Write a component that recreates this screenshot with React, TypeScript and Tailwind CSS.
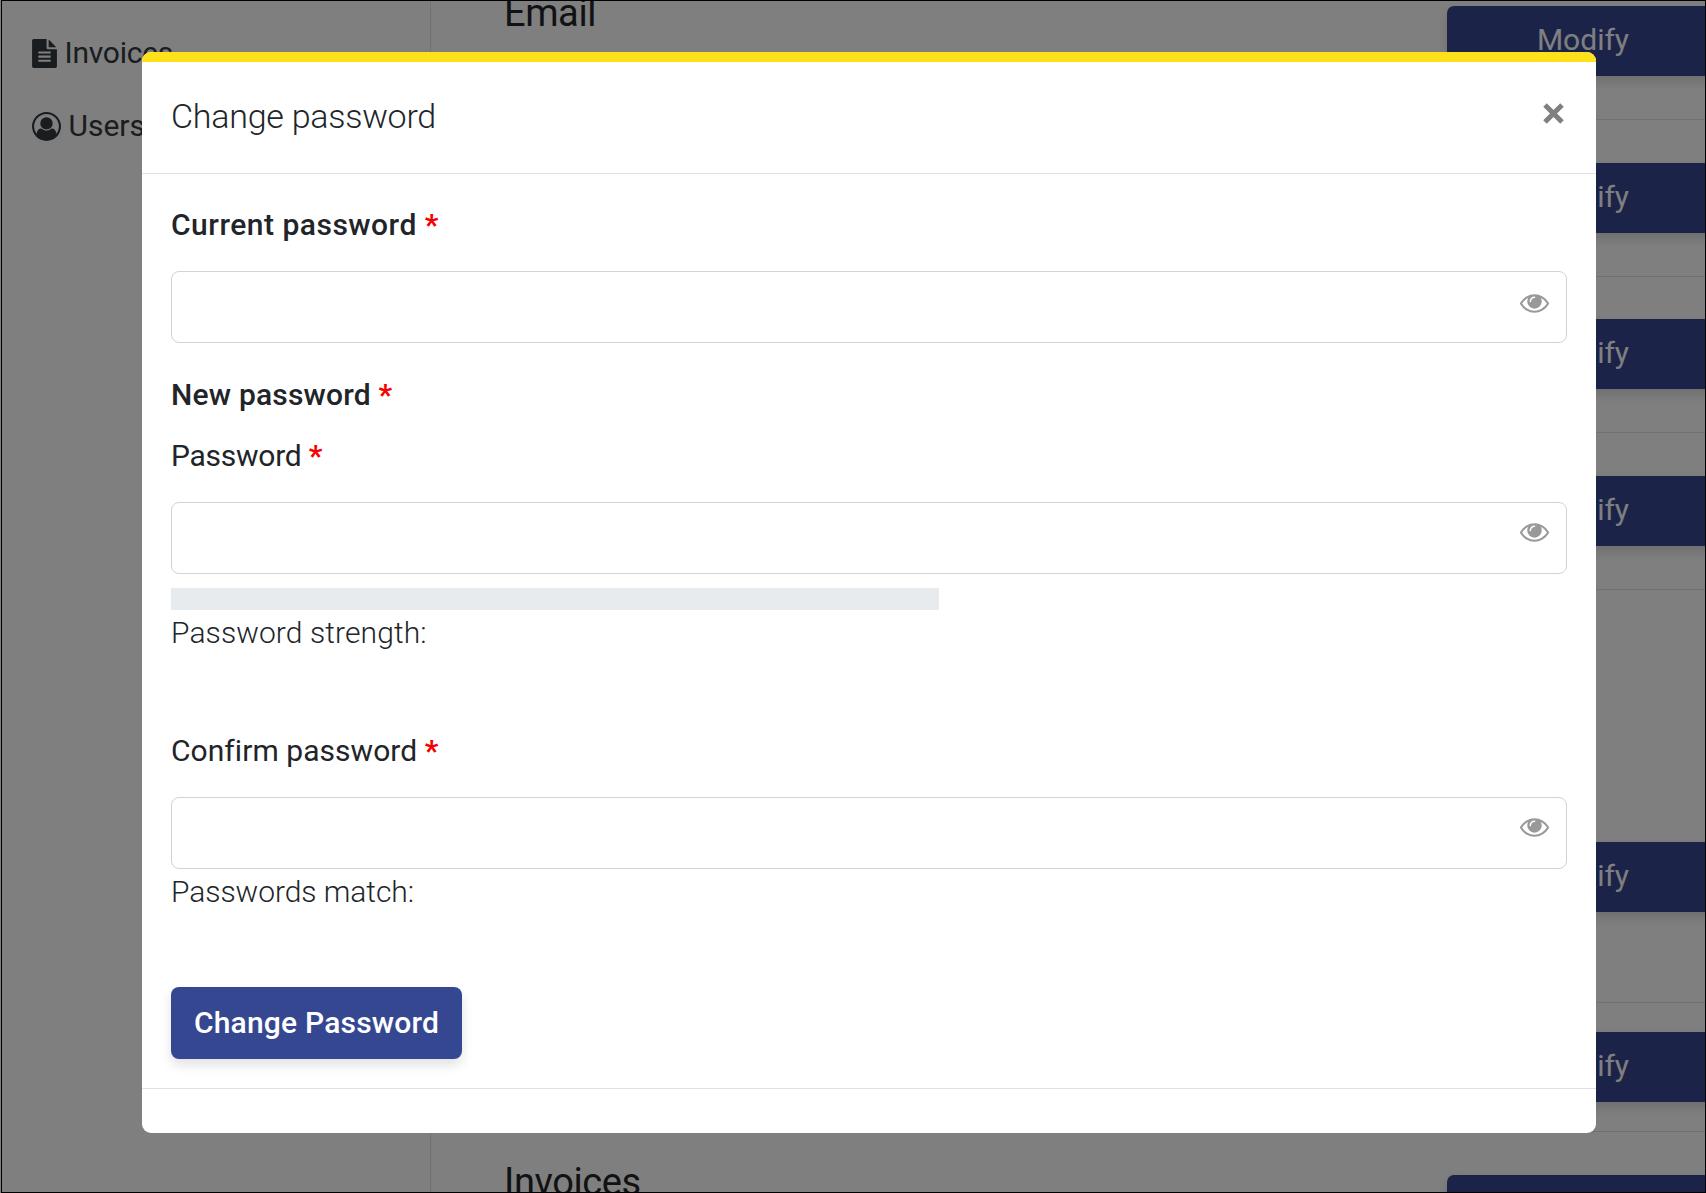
import React from "react";

function FileTextIcon() {
  return (
    <svg viewBox="128 0 1536 1792" className="h-[29px] w-[25px] shrink-0" fill="currentColor" aria-hidden="true">
      <path d="M1596 476q14 14 28 36h-472v-472q22 14 36 28zm-476 164h544v1056q0 40-28 68t-68 28h-1344q-40 0-68-28t-28-68v-1600q0-40 28-68t68-28h800v544q0 40 28 68t68 28zm160 736v-64q0-14-9-23t-23-9h-704q-14 0-23 9t-9 23v64q0 14 9 23t23 9h704q14 0 23-9t9-23zm0-256v-64q0-14-9-23t-23-9h-704q-14 0-23 9t-9 23v64q0 14 9 23t23 9h704q14 0 23-9t9-23zm0-256v-64q0-14-9-23t-23-9h-704q-14 0-23 9t-9 23v64q0 14 9 23t23 9h704q14 0 23-9t9-23z" />
    </svg>
  );
}

function UserCircleIcon() {
  return (
    <svg viewBox="0 0 1792 1792" className="size-[29px] shrink-0" fill="currentColor" aria-hidden="true">
      <path d="M896 0q182 0 348 71t286 191 191 286 71 348q0 181-70.5 347t-190.5 286-286 191.5-349 71.5-349-71-285.5-191.5-190.5-286-71-347.5 71-348 191-286 286-191 348-71zm619 1351q149-205 149-455 0-156-61-298t-164-245-245-164-298-61-298 61-245 164-164 245-61 298q0 250 149 455 66-327 306-327 131 128 313 128t313-128q240 0 306 327zm-235-647q0-159-112.5-271.5t-271.5-112.5-271.5 112.5-112.5 271.5 112.5 271.5 271.5 112.5 271.5-112.5 112.5-271.5z" />
    </svg>
  );
}

function EyeIcon() {
  return (
    <svg viewBox="0 384 1792 1152" className="h-[19px] w-[29px]" fill="currentColor" aria-hidden="true">
      <path d="M1664 960q-152-236-381-353 61 104 61 225 0 185-131.5 316.5t-316.5 131.5-316.5-131.5-131.5-316.5q0-121 61-225-229 117-381 353 133 205 333.500 326.500t434.500 121.500 434.500-121.500 333.500-326.500zm-720-384q0-20-14-34t-34-14q-125 0-214.500 89.500t-89.500 214.500q0 20 14 34t34 14 34-14 14-34q0-86 61-147t147-61q20 0 34-14t14-34zm848 384q0 34-20 69-140 230-376.500 368.500t-499.500 138.500-499.500-139-376.500-368q-20-35-20-69t20-69q140-229 376.500-368t499.500-139 499.500 139 376.500 368q20 35 20 69z" />
    </svg>
  );
}

function ModifyButton() {
  return (
    <button
      type="button"
      className="block h-[70px] w-[275px] shrink-0 rounded-[7px] bg-[#364792] pb-[3px] pr-[3px] text-center text-[30px] leading-[45px] text-white shadow-[0_5px_12px_rgba(0,0,0,0.15)]"
    >
      Modify
    </button>
  );
}

const rows = [
  { row: "h-[119px] pt-[5px]", title: "Email", titleClass: "-mt-[17px]" },
  { row: "h-[157px] pt-[43px]" },
  { row: "h-[156px] pt-[42px]" },
  { row: "h-[157px] pt-[43px]" },
  { row: "h-[413px] pt-[252px]" },
  { row: "h-[129px] pt-[29px]" },
  { row: "h-[157px] pt-[43px]", title: "Invoices", titleClass: "-mt-[17px]" },
];

function Star() {
  return <span className="font-bold text-[#f60000]"> *</span>;
}

function PasswordInput({ label, eye }: { label: string; eye: string }) {
  return (
    <div className="relative mt-6">
      <input
        type="password"
        aria-label={label}
        className="block h-[72px] w-full rounded-[8px] border border-[#ced4da] bg-white px-5 outline-none"
      />
      <span className={`absolute right-[18px] text-[#999] ${eye}`}>
        <EyeIcon />
      </span>
    </div>
  );
}

export default function App() {
  return (
    <div className="h-[1193px] w-[1706px] overflow-hidden bg-[#808080] pl-px font-[Roboto,'Liberation_Sans',sans-serif]">
      <div className="relative h-full overflow-hidden border border-black bg-white">
        <div className="flex h-full">
          <aside className="w-[429px] shrink-0 border-r border-[#dee2e6] pl-[30px] text-[30px] leading-[45px] text-[#343a40]">
            <div className="mt-[30px] flex items-center gap-[7.5px] tracking-[-0.25px]">
              <FileTextIcon />
              <span className="-mt-px mb-px">Invoices</span>
            </div>
            <div className="mt-[28px] flex items-center gap-[7.5px]">
              <UserCircleIcon />
              <span className="-mt-px mb-px">Users</span>
            </div>
          </aside>
          <main className="w-[1291px] shrink-0 pl-[72px]">
            {rows.map((r, i) => (
              <section key={i} className={`flex items-start justify-between border-b border-[#dee2e6] pl-px ${r.row}`}>
                <h2 className={`text-[38px] leading-[48px] tracking-[-0.4px] text-[#212529] ${r.titleClass ?? ""}`}>{r.title}</h2>
                <ModifyButton />
              </section>
            ))}
          </main>
        </div>

        <div className="absolute inset-0 flex items-start bg-black/50 pl-[140px] pt-[51px]">
          <div
            role="dialog"
            aria-label="Change password"
            className="h-[1081px] w-[1454px] overflow-hidden rounded-[9px] bg-white text-[30px] leading-[45px] text-[#212529]"
          >
            <div className="h-[10px] bg-[#ffe11b]" />
            <header className="flex h-[112px] items-start justify-between border-b border-[#dee2e6] pl-[29px] pr-[32px] pt-[28px]">
              <h1 className="mt-px text-[34px] font-light leading-[51px] tracking-[-0.25px]">Change password</h1>
              <button type="button" aria-label="Close" className="mt-[13px] text-[#808080]">
                <svg viewBox="0 0 21 21" className="size-[21px]" fill="none" stroke="currentColor" strokeWidth="5">
                  <path d="M2 2l17 17M19 2L2 19" />
                </svg>
              </button>
            </header>
            <div className="h-[915px] border-b border-[#dee2e6] px-[29px] pt-[28px]">
              <div className="font-medium tracking-[0.5px]">
                Current password
                <Star />
              </div>
              <PasswordInput label="Current password" eye="top-[23px]" />
              <div className="mt-[29px] font-medium tracking-[0.2px]">
                New password
                <Star />
              </div>
              <div className="mt-4 tracking-[-0.25px]">
                Password
                <Star />
              </div>
              <PasswordInput label="Password" eye="top-[21px]" />
              <div className="mt-[14px] h-[22px] w-[768px] bg-[#e8ebee]" />
              <div className="font-light tracking-[0.1px]">Password strength:</div>
              <div className="mt-[73px] tracking-[0.05px]">
                Confirm password
                <Star />
              </div>
              <PasswordInput label="Confirm password" eye="top-[21px]" />
              <div className="font-light tracking-[-0.05px]">Passwords match:</div>
              <button
                type="button"
                className="mt-[73px] block h-[72px] w-[291px] rounded-[8px] bg-[#364792] pb-[2px] text-center font-medium leading-[45px] tracking-[0.2px] text-white shadow-[0_6px_12px_rgba(0,0,0,0.12)]"
              >
                Change Password
              </button>
            </div>
          </div>
        </div>
      </div>
    </div>
  );
}
